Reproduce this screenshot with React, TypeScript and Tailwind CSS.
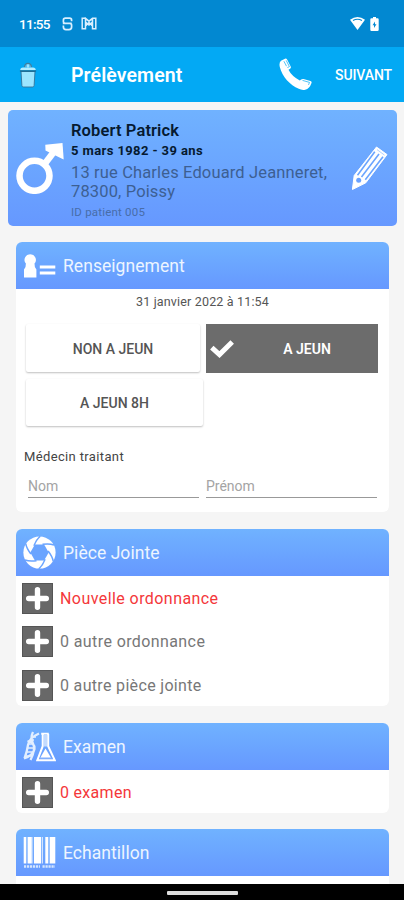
import type { ReactNode } from "react";
import clsx from "clsx";

const ATTACHMENTS = [
  { label: "Nouvelle ordonnance", required: true, tracking: "tracking-[0.43px]" },
  { label: "0 autre ordonnance", required: false, tracking: "tracking-[0.4px]" },
  { label: "0 autre pièce jointe", required: false, tracking: "tracking-[0.33px]" },
];

function StatusBar() {
  return (
    <div className="flex h-[47px] items-center bg-[#0288d1] pr-[25px] pl-[19px] text-white">
      <span className="w-[31px] text-[13.5px] leading-4 font-medium tracking-[-0.7px] whitespace-nowrap">11:55</span>
      <svg className="ml-[12px] h-[14px] w-[11px]" viewBox="0 0 11 14" fill="none" stroke="#d9efff" strokeWidth="1.7" aria-hidden="true">
        <path d="M9.6 4.3V3.2Q9.6 1.2 7.6 1.2H3.4Q1.4 1.2 1.4 3.2V4.7Q1.4 6.3 3.4 6.3H9.7M1.4 8.5V10Q1.4 12.6 4 12.6H7Q9.6 12.6 9.6 10V8.3Q9.6 6.4 7.6 6.4H.8" />
      </svg>
      <svg className="ml-[8px] h-[13px] w-[16px]" viewBox="0 0 16 13" fill="none" stroke="#d9efff" strokeWidth="1.5" aria-hidden="true">
        <path d="M4.5 1.3H1.2V11.7H4.5V1.3L8 4.2l3.5-2.9h3.3v10.4h-3.3V1.3M4.5 5 8 8l3.5-3M4.5 9 8 5.5 11.5 9" />
      </svg>
      <svg className="ml-auto h-[15px] w-[15px]" viewBox="0 0 15 15" aria-hidden="true">
        <path d="M0 3.8Q7.5-1.6 15 3.8L7.5 14z" fill="#fff" />
        <path d="M3 4.5Q7.5 2 12 4.5" fill="none" stroke="#0288d1" strokeWidth="1.1" />
      </svg>
      <svg className="ml-[5px] h-[14px] w-[9px]" viewBox="0 0 9 14" aria-hidden="true">
        <path d="M3 0h3v1.3h1.5Q8.7 1.3 8.7 2.5V12.8Q8.7 14 7.5 14h-6Q.3 14 .3 12.8V2.5Q.3 1.3 1.5 1.3H3z" fill="#fff" />
        <path d="M5 4.5 2.5 8.3H4v2.8L6.5 7.3H5z" fill="#0288d1" />
      </svg>
    </div>
  );
}

function TrashIcon() {
  return (
    <svg className="h-[26px] w-[18px]" viewBox="0 0 18 26" aria-hidden="true">
      <path d="M5.5 5.3Q5.7 1.3 9 1.3t3.5 4" fill="#5cbdec" stroke="#417f9e" strokeWidth="1.2" />
      <path d="M8 2.5h2v3H8z" fill="#9be5ff" />
      <path d="M2 9.5h14l-.9 14Q15 25 13.3 25H4.7Q3 25 2.9 23.5z" fill="#9be5ff" stroke="#35749a" strokeWidth=".9" />
      <path d="M1.2 8.3Q1.2 5.4 4 5.4h10q2.8 0 2.8 2.9z" fill="#b4edff" />
      <path d="M.9 9h16.2" stroke="#14678f" strokeWidth="1.3" />
    </svg>
  );
}

function PhoneIcon() {
  return (
    <svg className="h-[33px] w-[33px]" viewBox="0 0 33 33" aria-hidden="true">
      <path d="M2 2.7 6 .8Q7.3.2 8.1 1.6l3.6 6.8q.7 1.4-.6 2.3l-1.6 1.1Q12.5 18 20.8 22.6l1.4-1.1q1-.9 2.3-.5l6.9 1.9q1.6.5 1.1 2.1-1.9 5.7-6.3 6.7-3.2.8-6.4-.9C11 27.3 3.2 18.5.8 9Q-.2 4.5 2 2.7z" fill="#fff" />
      <path d="m7.2 2.4 3.2 6.2-2 1M23.5 22.4l7 2-1 2.5M4.9 3.2l2.6 5" fill="none" stroke="#03a9f4" strokeWidth=".7" />
    </svg>
  );
}

function MaleIcon() {
  return (
    <svg className="h-[52px] w-12 shrink-0" viewBox="0 0 48 52" aria-hidden="true">
      <circle cx="18.5" cy="33.8" r="15" fill="none" stroke="#fff" strokeWidth="6.5" />
      <path d="M27.5 23.5 38.5 9" stroke="#fff" strokeWidth="6.5" />
      <path d="M29.3 2.8 46.5 1 47.7 17.5 41.5 14.5 29.5 8.5z" fill="#fff" />
    </svg>
  );
}

function PencilIcon() {
  return (
    <svg className="h-[45px] w-9" viewBox="0 0 36 45" aria-hidden="true">
      <path d="M24.5 1 35 8.6 13.8 36.8.4 43.5 2.2 29.5z" fill="#fff" stroke="#fff" strokeLinejoin="round" />
      <path d="M22.8 5.8 5.5 29.3M27 8.1 9.5 31M31 10.8 13.3 33.8" stroke="#6ba5ff" strokeWidth="1.6" />
      <circle cx="6.7" cy="34.2" r="2.5" fill="#6aa2ff" />
      <path d="m25 3.6 7.5 5.5" stroke="#a9ccff" strokeWidth=".9" />
    </svg>
  );
}

function PersonIcon() {
  return (
    <svg className="h-8 w-[33px]" viewBox="0 0 33 32" fill="#fff" aria-hidden="true">
      <path d="M7.2 4.2a5.7 5.7 0 0 1 4.3 9.4q-.2 3.6 1.9 6v7.8H1v-7.8q2.1-2.4 1.9-6A5.7 5.7 0 0 1 7.2 4.2zM16.8 15.5h15.5v3H16.8zM16.8 21.6h15.5v3H16.8z" />
    </svg>
  );
}

// Six identical blades, each turned by 60 degrees
function ApertureIcon() {
  return (
    <svg className="h-[33px] w-[33px]" viewBox="-16.5 -16.5 33 33" aria-hidden="true">
      <circle r="16.1" fill="#fff" />
      <path d="M-4.6-8h9.2L9.2 0 4.6 8h-9.2L-9.2 0z" fill="#6aa4ff" />
      {[0, 60, 120, 180, 240, 300].map((angle) => (
        <path key={angle} d="M3-8.2Q10-9.2 14.5-7.5" transform={`rotate(${angle})`} fill="none" stroke="#6aa4ff" strokeWidth="1.5" />
      ))}
    </svg>
  );
}

function LabIcon() {
  return (
    <svg className="h-8 w-[33px]" viewBox="0 0 33 32" fill="none" aria-hidden="true">
      <g stroke="#e3efff" strokeWidth="2.3">
        <path d="M10 1Q7 7 10 12.5T7.5 29M16 2.5Q6 7 5 14T1.5 27.5M1 27.5Q10.5 24 11.5 18T4.5 10" />
        <path d="M9 6h4M8 9h3M6 13h5M4 17h7M4 21h6M3 25h5" strokeWidth="1.3" />
      </g>
      <path d="M18.2 2.7h7.6M19.7 3v12.2L14.3 29.3h17.5L25.2 15.2V3" stroke="#fff" strokeWidth="2" />
      <path d="M21 3h3v12.5h-3z" fill="#c3dbff" />
      <path d="m22.5 17.5 5.5 9.3H17.3z" fill="#fff" />
      <path d="M16.8 27.2h12.8" stroke="#8bb5fb" strokeWidth="1" />
    </svg>
  );
}

function BarcodeIcon() {
  return (
    <svg className="h-[33px] w-[33px]" viewBox="0 0 33 33" aria-hidden="true">
      <path d="M.7 1h2.6v26.5H.7zM4.6 1h4.2v26.5H4.6zM11 1h7v26.5h-7zM18.8 1h.9v26.5h-.9zM22.3 1H25v26.5h-2.7zM26.8 1h5.5v26.5h-5.5z" fill="#fff" />
      <path d="M9.6 1v26.5M25.9 1v26.5" stroke="#b9d7ff" strokeWidth=".9" />
      <path d="M1 30.5h16M19.5 30.5H32" stroke="#d5e6ff" strokeWidth="2.5" strokeDasharray="2.2 .8" />
    </svg>
  );
}

function AddRow({ label, required, tracking }: { label: string; required: boolean; tracking: string }) {
  return (
    <li className="flex h-[43.5px] items-center pt-px pl-1.5">
      <button aria-label={`Ajouter : ${label}`} className="flex h-[31px] w-[31px] items-center justify-center border border-[#555] bg-[#686868]">
        <svg className="h-[25px] w-[25px]" viewBox="0 0 25 25" stroke="#fff" strokeWidth="5.4" strokeLinecap="round" aria-hidden="true">
          <path d="M12.5 3.7v17.6M3.7 12.5h17.6" />
        </svg>
      </button>
      <span className={clsx("ml-[7px] pt-px text-base", tracking, required ? "text-[#f4373a]" : "text-[#777]")}>{label}</span>
    </li>
  );
}

function Section({ title, icon, className, children }: { title: string; icon: ReactNode; className: string; children?: ReactNode }) {
  return (
    <section className={clsx("mx-4 w-[373px] shrink-0 overflow-hidden rounded-[6px] bg-white", className)}>
      <h2 className="flex h-[47px] items-center bg-linear-to-b from-[#70b2ff] to-[#6698ff] pl-[7px] text-[17.5px] text-[#edf5ff]">
        {icon}
        <span className="ml-[7px] pt-[2px] tracking-[0.05px]">{title}</span>
      </h2>
      {children}
    </section>
  );
}

export default function App() {
  return (
    <div className="flex h-[900px] w-[404px] flex-col overflow-hidden bg-[#f5f5f5] font-['Roboto',sans-serif]">
      <StatusBar />
      <header className="flex h-[55px] shrink-0 items-center bg-[#03a9f4] pl-[19px] text-white">
        <TrashIcon />
        <h1 className="ml-[34px] w-[180px] pt-0.5 text-[19.5px] font-semibold tracking-[0.1px]">Prélèvement</h1>
        <span className="ml-[28px]"><PhoneIcon /></span>
        <button className="ml-[23px] pt-0.5 text-[14px] font-medium tracking-[-0.1px] whitespace-nowrap">SUIVANT</button>
      </header>

      <main className="flex min-h-0 flex-1 flex-col overflow-hidden pt-2">
        <div className="ml-[8px] flex h-[116px] w-[389px] shrink-0 rounded-[5px] bg-linear-to-b from-[#70b2ff] to-[#6698ff]">
          <div className="mt-[32px] ml-[8px]"><MaleIcon /></div>
          <div className="ml-[7px] w-[270px] shrink-0 pt-[10px] whitespace-nowrap">
            <p className="text-[16.5px] leading-[21px] font-semibold tracking-[0.12px] text-[#061a30]">Robert Patrick</p>
            <p className="text-[13px] leading-5 font-bold tracking-[0.4px] text-[#061a30]">5 mars 1982 - 39 ans</p>
            <p className="pt-[1.5px] text-[16.5px] leading-[19.5px] tracking-[0.14px] text-[#3d5f92]">
              13 rue Charles Edouard Jeanneret,<br />78300, Poissy
            </p>
            <p className="pt-px text-[11.5px] leading-[18px] tracking-[0.2px] text-[#486da9]">ID patient 005</p>
          </div>
          <button aria-label="Modifier le patient" className="mt-[36px] ml-[11px] h-[45px]"><PencilIcon /></button>
        </div>

        <Section title="Renseignement" icon={<PersonIcon />} className="mt-4 h-[270px]">
          <p className="pt-[3px] text-center text-[12.5px] leading-5 tracking-[0.17px] text-[#555]">31 janvier 2022 à 11:54</p>
          <div className="mt-[12px] ml-[10px] grid grid-cols-[174px_172px] gap-x-[6px] gap-y-[7px] text-[14px] font-medium text-[#555]">
            <button className="h-[48px] rounded-[2px] bg-white pt-0.5 shadow-[0_1px_2px_rgba(0,0,0,0.25)]">NON A JEUN</button>
            <button className="flex h-[49px] items-center bg-[#6c6c6c] font-semibold text-white">
              <svg className="ml-[4px] h-[18px] w-6" viewBox="0 0 24 18" fill="none" stroke="#fff" strokeWidth="5" aria-hidden="true">
                <path d="m1.8 7.6 7.7 7L22.2 2" />
              </svg>
              <span className="flex-1 pt-px pl-0.5 text-center">A JEUN</span>
            </button>
            <button className="-mt-px h-[47px] w-[177px] rounded-[2px] bg-white pt-0.5 shadow-[0_1px_2px_rgba(0,0,0,0.25)]">A JEUN 8H</button>
          </div>
          <p className="mt-[21px] ml-2 text-[13px] leading-5 tracking-[0.36px] text-[#444]">Médecin traitant</p>
          <div className="mt-2 ml-3 flex gap-[7px]">
            <input placeholder="Nom" aria-label="Nom" className="h-[23px] w-[171px] border-b border-[#999] text-[14px] placeholder:text-[#a4a4a4]" />
            <input placeholder="Prénom" aria-label="Prénom" className="h-[23px] w-[171px] border-b border-[#999] text-[14px] placeholder:text-[#a4a4a4]" />
          </div>
        </Section>

        <Section title="Pièce Jointe" icon={<ApertureIcon />} className="mt-[17px] h-[177px]">
          <ul>
            {ATTACHMENTS.map((item) => (
              <AddRow key={item.label} {...item} />
            ))}
          </ul>
        </Section>

        <Section title="Examen" icon={<LabIcon />} className="mt-[17px] h-[90px]">
          <ul>
            <AddRow label="0 examen" required tracking="tracking-[0.3px]" />
          </ul>
        </Section>

        <Section title="Echantillon" icon={<BarcodeIcon />} className="mt-4 h-[90px]" />
      </main>

      <nav className="flex h-4 shrink-0 justify-center bg-black pt-[7px]">
        <span className="h-1 w-[71px] rounded-[1px] bg-[#ddd]" />
      </nav>
    </div>
  );
}
